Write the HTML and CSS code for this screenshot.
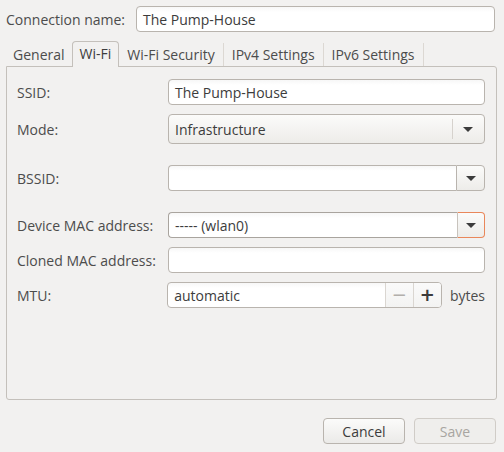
FILE: index.html
```html
<!DOCTYPE html>
<html>
<head>
<meta charset="utf-8">
<link rel="stylesheet" href="styles.css">
</head>
<body>
<div class="top">
  <span class="top-label">Connection name:</span>
  <div class="entry top-entry">The Pump-House</div>
</div>
<div class="tabs">
  <div class="tab narrow">General</div>
  <div class="tab narrow active">Wi-Fi</div>
  <div class="tab">Wi-Fi Security</div>
  <div class="tab">IPv4 Settings</div>
  <div class="tab last">IPv6 Settings</div>
</div>
<div class="panel">
  <div class="row r-ssid">
    <span class="label">SSID:</span>
    <div class="entry field">The Pump-House</div>
  </div>
  <div class="row r-mode">
    <span class="label">Mode:</span>
    <div class="combo field">
      <span class="combo-text">Infrastructure</span>
      <span class="combo-sep"></span>
      <span class="arrow"></span>
    </div>
  </div>
  <div class="row r-bssid">
    <span class="label">BSSID:</span>
    <div class="combo-entry field">
      <div class="ce-text"></div>
      <div class="ce-btn"><span class="arrow"></span></div>
    </div>
  </div>
  <div class="row r-mac">
    <span class="label">Device MAC address:</span>
    <div class="combo-entry field focus">
      <div class="ce-text">----- (wlan0)</div>
      <div class="ce-btn"><span class="arrow"></span></div>
    </div>
  </div>
  <div class="row r-cloned">
    <span class="label">Cloned MAC address:</span>
    <div class="entry field"></div>
  </div>
  <div class="row r-mtu">
    <span class="label">MTU:</span>
    <div class="spin">
      <div class="spin-text">automatic</div>
      <div class="spin-btn minus"><span class="sym">−</span></div>
      <div class="spin-btn plus"><span class="sym">+</span></div>
    </div>
    <span class="unit">bytes</span>
  </div>
</div>
<div class="actions">
  <div class="btn">Cancel</div>
  <div class="btn disabled">Save</div>
</div>
</body>
</html>
```
FILE: styles.css
```css
html, body {
  margin: 0;
  padding: 0;
  background: #f2f1f0;
  width: 504px;
  height: 452px;
  overflow: hidden;
}
body {
  font-family: "Open Sans", "DejaVu Sans", sans-serif;
  font-size: 14px;
  color: #3c3c3c;
}
.top {
  display: flex;
  align-items: center;
  padding: 6px 9px 0 6px;
  height: 26px;
}
.top-label {
  width: 130px;
  color: #4c4c4c;
}
.entry {
  box-sizing: border-box;
  height: 26px;
  border: 1px solid #b9b4ae;
  border-radius: 4px;
  background: linear-gradient(#f7f7f7, #ffffff 5px);
  padding: 0 6px;
  display: flex;
  align-items: center;
  color: #3c3c3c;
}
.top-entry {
  flex: 1;
}
.tabs {
  display: flex;
  margin: 9px 0 0 6px;
  height: 25px;
  align-items: flex-end;
}
.tab {
  box-sizing: border-box;
  height: 23px;
  padding: 0 8px 1px;
  display: flex;
  align-items: center;
  border-right: 1px solid #dcd8d3;
  color: #4c4c4c;
}
.tab.narrow {
  padding: 0 7px 1px;
}
.tab.active {
  height: 26px;
  border: 1px solid #c4c0bb;
  border-bottom: none;
  border-radius: 4px 4px 0 0;
  background: #f2f1f0;
  margin: 0 0 -1px -1px;
  position: relative;
  z-index: 1;
  padding: 0 7px 2px;
  color: #3c3c3c;
}
.panel {
  box-sizing: border-box;
  margin: 0 7px 0 6px;
  height: 334px;
  border: 1px solid #c4c0bb;
  border-radius: 0 3px 3px 3px;
  padding: 12px 11px 0 10px;
}
.row {
  display: flex;
  align-items: center;
}
.label {
  width: 151px;
  color: #4c4c4c;
}
.field {
  width: 317px;
}
.r-ssid { height: 26px; }
.r-mode { height: 30px; margin-top: 9px; }
.r-bssid { height: 26px; margin-top: 21px; }
.r-mac { height: 26px; margin-top: 21px; }
.r-cloned { height: 26px; margin-top: 9px; }
.r-mtu { height: 26px; margin-top: 9px; }

.combo {
  box-sizing: border-box;
  height: 30px;
  border: 1px solid #b9b4ae;
  border-radius: 4px;
  background: linear-gradient(#fbfbfa, #edece9);
  display: flex;
  align-items: center;
  padding-left: 6px;
}
.combo-text {
  flex: 1;
}
.combo-sep {
  width: 1px;
  height: 20px;
  background: #d6d2cd;
}
.combo .arrow {
  margin: 0 11px 0 10px;
}
.arrow {
  width: 0;
  height: 0;
  border-left: 5px solid transparent;
  border-right: 5px solid transparent;
  border-top: 5px solid #3c3c3c;
}
.combo-entry {
  box-sizing: border-box;
  height: 26px;
  display: flex;
}
.ce-text {
  flex: 1;
  box-sizing: border-box;
  border: 1px solid #b9b4ae;
  border-right: none;
  border-radius: 4px 0 0 4px;
  background: linear-gradient(#f7f7f7, #ffffff 5px);
  padding: 0 6px;
  display: flex;
  align-items: center;
}
.ce-btn {
  box-sizing: border-box;
  width: 29px;
  border: 1px solid #b9b4ae;
  border-radius: 0 4px 4px 0;
  background: linear-gradient(#fbfbfa, #edece9);
  display: flex;
  align-items: center;
  justify-content: center;
}
.focus .ce-text {
  border-color: #a9a49e;
}
.focus .ce-btn {
  width: 28px;
  border-color: #e9875a;
  border-left: 1px solid #c8c3bd;
}
.spin {
  box-sizing: border-box;
  width: 276px;
  height: 26px;
  border: 1px solid #b9b4ae;
  border-radius: 4px;
  background: linear-gradient(#f7f7f7, #ffffff 5px);
  display: flex;
  overflow: hidden;
}
.spin-text {
  flex: 1;
  padding: 0 6px;
  display: flex;
  align-items: center;
}
.spin-btn {
  width: 27px;
  border-left: 1px solid #dad6d1;
  display: flex;
  align-items: center;
  justify-content: center;
  background: linear-gradient(#fafafa, #f3f3f2);
}
.sym {
  font-family: "DejaVu Sans", sans-serif;
  font-size: 18px;
  line-height: 1;
}
.minus .sym { color: #b2afab; }
.plus .sym { color: #3c3c3c; font-weight: bold; }
.unit {
  margin-left: 8px;
  color: #4c4c4c;
}
.actions {
  display: flex;
  justify-content: flex-end;
  gap: 9px;
  margin: 18px 8px 0 0;
}
.btn {
  box-sizing: border-box;
  width: 82px;
  height: 26px;
  border: 1px solid #b9b4ae;
  border-radius: 4px;
  background: linear-gradient(#fbfbfa, #ebeae8);
  display: flex;
  align-items: center;
  justify-content: center;
  color: #3c3c3c;
}
.btn.disabled {
  background: #efeeec;
  border-color: #d0ccc7;
  color: #a8a5a1;
}
```
